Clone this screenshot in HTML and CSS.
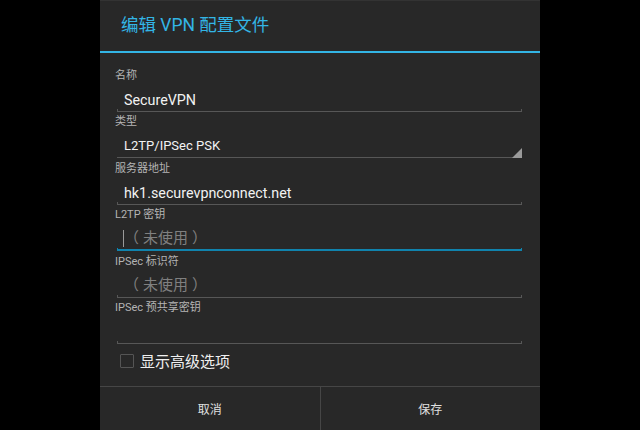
FILE: index.html
```html
<!DOCTYPE html>
<html lang="zh-CN">
<head>
    <meta charset="UTF-8">
    <title>编辑 VPN 配置文件</title>
    <link rel="stylesheet" href="styles.css">
</head>
<body>
    <div class="dialog">
        <div class="dialog-title">编辑 VPN 配置文件</div>

        <div class="form">
            <div class="field">
                <div class="label">名称</div>
                <div class="value">SecureVPN</div>
                <div class="line"></div>
            </div>
            <div class="field">
                <div class="label">类型</div>
                <div class="value spinner">L2TP/IPSec PSK</div>
                <div class="line spinner-line">
                    <svg class="arrow" width="10" height="10" viewBox="0 0 10 10"><polygon points="10,0 10,10 0,10" fill="#9a9a9a"/></svg>
                </div>
            </div>
            <div class="field">
                <div class="label">服务器地址</div>
                <div class="value">hk1.securevpnconnect.net</div>
                <div class="line"></div>
            </div>
            <div class="field">
                <div class="label">L2TP 密钥</div>
                <div class="value hint"><span class="cursor"></span><span class="open">（</span>未使用<span class="close">）</span></div>
                <div class="line focused"></div>
            </div>
            <div class="field">
                <div class="label">IPSec 标识符</div>
                <div class="value hint"><span class="gap"></span><span class="open">（</span>未使用<span class="close">）</span></div>
                <div class="line"></div>
            </div>
            <div class="field">
                <div class="label">IPSec 预共享密钥</div>
                <div class="value"></div>
                <div class="line"></div>
            </div>

            <label class="check">
                <span class="box"></span>
                <span>显示高级选项</span>
            </label>
        </div>

        <div class="buttons">
            <div class="btn">取消</div>
            <div class="btn">保存</div>
        </div>
    </div>
</body>
</html>
```

FILE: styles.css
```css
body {
    margin: 0;
    background-color: #000;
    font-family: Roboto, "Noto Sans CJK SC", sans-serif;
    color: #eee;
}
.dialog {
    width: 440px;
    height: 430px;
    margin: 0 auto;
    background-color: #282828;
    border-top: 1px solid #333;
    box-sizing: border-box;
    display: flex;
    flex-direction: column;
}
.dialog-title {
    height: 50px;
    line-height: 48px;
    padding-left: 21px;
    font-size: 17.5px;
    color: #33b5e5;
    border-bottom: 2px solid #33b5e5;
}
.form {
    flex: 1;
    padding: 15px 18px 0 15px;
}
.field {
    height: 46.4px;
}
.label {
    height: 16px;
    line-height: 16px;
    font-size: 11px;
    color: #b4b4b4;
}
.value {
    height: 24px;
    line-height: 24px;
    margin-top: 4px;
    padding-left: 9px;
    font-size: 14.3px;
    color: #f2f2f2;
    display: flex;
    align-items: center;
}
.value.spinner {
    font-size: 13px;
}
.value.hint {
    font-size: 15px;
    color: #808080;
    padding-left: 8px;
    margin-top: 3px;
}
.cursor {
    width: 1px;
    height: 17px;
    background-color: #9a9a9a;
}
.gap {
    width: 1px;
}
.open {
    margin-right: 4px;
}
.close {
    margin-left: 4px;
}
.line {
    height: 2px;
    margin-top: -3px;
    margin-left: 2px;
    border: 1px solid #575757;
    border-top: none;
    display: flex;
    justify-content: flex-end;
    align-items: flex-end;
}
.value.hint + .line {
    margin-top: -2px;
}
.line.spinner-line {
    height: 10px;
    margin-top: -11px;
    border-left: none;
    border-right: none;
}
.arrow {
    display: block;
    margin-bottom: -1px;
}
.line.focused {
    height: 1px;
    border-left-color: #1083ad;
    border-right-color: #1083ad;
    border-bottom: 2px solid #1083ad;
}
.check {
    display: flex;
    align-items: center;
    gap: 6px;
    margin-top: 4px;
    padding-left: 5px;
    font-size: 15px;
    color: #f0f0f0;
}
.box {
    width: 12px;
    height: 12px;
    border: 1px solid #555;
    border-radius: 1px;
}
.buttons {
    height: 43px;
    display: flex;
    border-top: 1px solid #464646;
}
.btn {
    flex: 1;
    display: flex;
    align-items: center;
    justify-content: center;
    font-size: 12px;
    color: #e0e0e0;
}
.btn + .btn {
    border-left: 1px solid #464646;
}
```
